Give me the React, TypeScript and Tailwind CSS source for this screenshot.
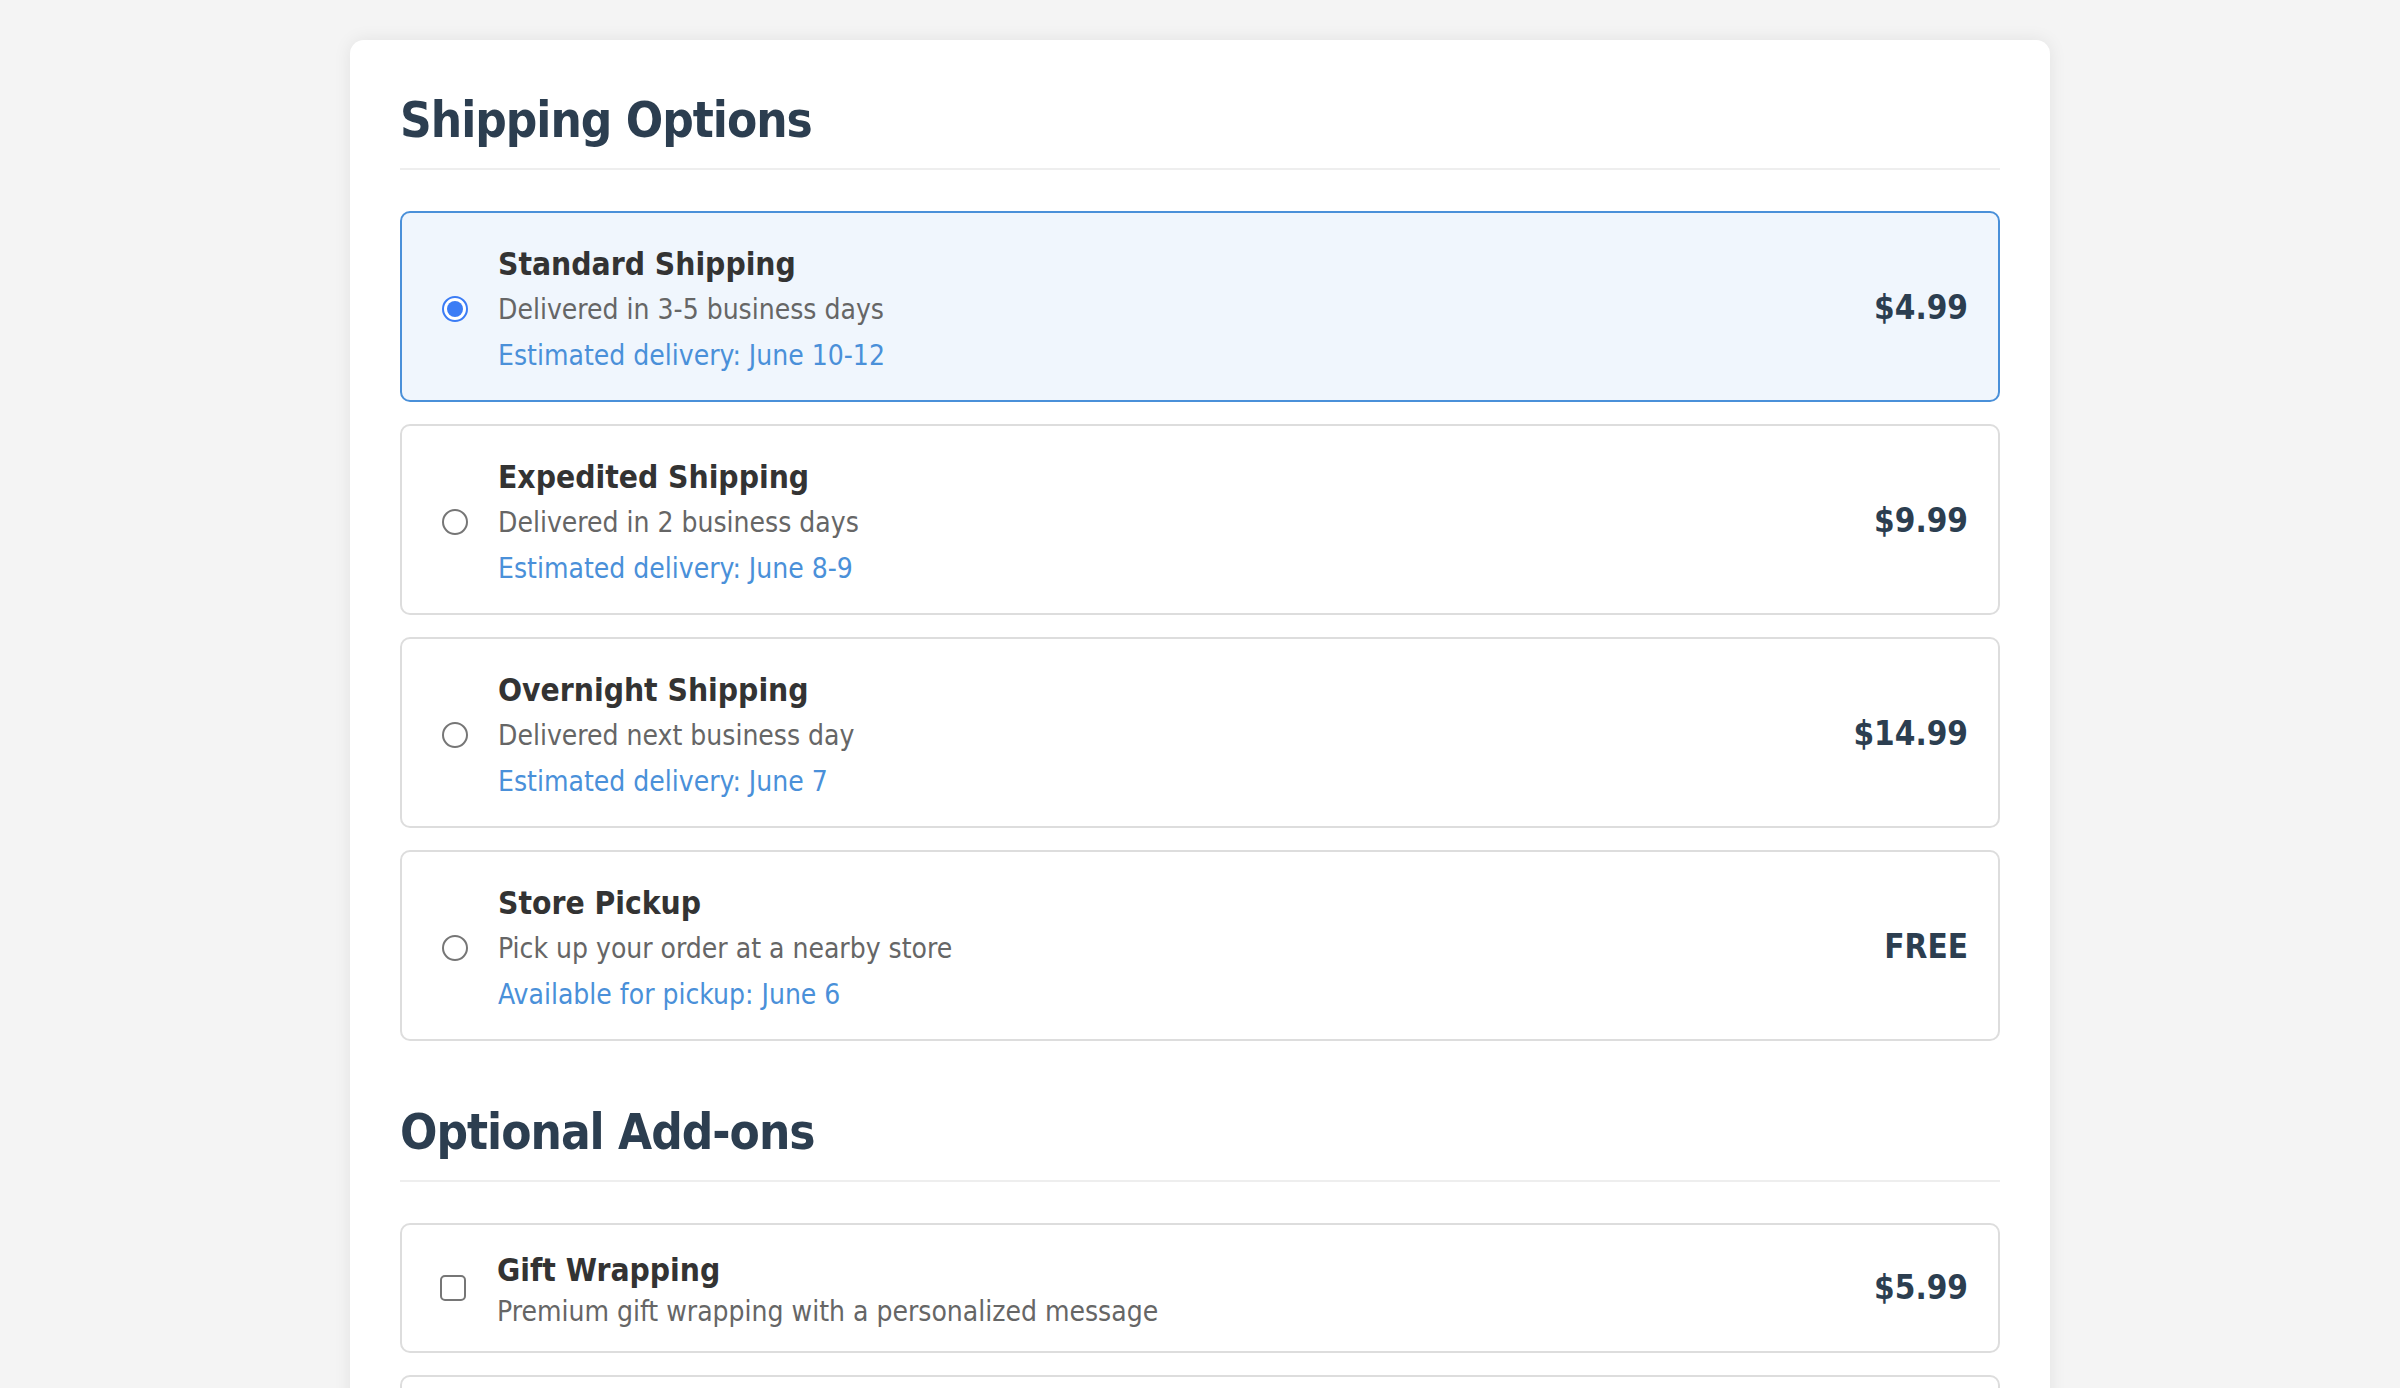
import React from "react";

type ShippingOption = {
  id: string;
  title: string;
  desc: string;
  eta: string;
  price: string;
};

type Addon = {
  id: string;
  title: string;
  desc: string;
  price: string;
};

const shippingOptions: ShippingOption[] = [
  {
    id: "standard",
    title: "Standard Shipping",
    desc: "Delivered in 3-5 business days",
    eta: "Estimated delivery: June 10-12",
    price: "$4.99",
  },
  {
    id: "expedited",
    title: "Expedited Shipping",
    desc: "Delivered in 2 business days",
    eta: "Estimated delivery: June 8-9",
    price: "$9.99",
  },
  {
    id: "overnight",
    title: "Overnight Shipping",
    desc: "Delivered next business day",
    eta: "Estimated delivery: June 7",
    price: "$14.99",
  },
  {
    id: "pickup",
    title: "Store Pickup",
    desc: "Pick up your order at a nearby store",
    eta: "Available for pickup: June 6",
    price: "FREE",
  },
];

const addons: Addon[] = [
  {
    id: "gift",
    title: "Gift Wrapping",
    desc: "Premium gift wrapping with a personalized message",
    price: "$5.99",
  },
  {
    id: "insurance",
    title: "Shipping Insurance",
    desc: "Protect your package against loss or damage",
    price: "$2.99",
  },
];

const Radio = ({ checked }: { checked: boolean }) => {
  if (checked) {
    return (
      <div className="w-[26px] h-[26px] shrink-0 rounded-full border-2 border-[#3b7cf5] bg-white flex items-center justify-center mt-[4px]">
        <div className="w-[16px] h-[16px] rounded-full bg-[#3b7cf5]" />
      </div>
    );
  }
  return (
    <div className="w-[26px] h-[26px] shrink-0 rounded-full border-2 border-[#767676] bg-white mt-[4px]" />
  );
};

const SectionTitle = ({ children }: { children: React.ReactNode }) => (
  <h2 className="text-[49px] leading-[57px] font-bold tracking-[-1px] text-[#2c3e50] pt-[2px] pb-[19px] border-b-2 border-[#eeeeee] mb-[41px]">
    {children}
  </h2>
);

const App = () => {
  const [selected, setSelected] = React.useState("standard");
  const [picked, setPicked] = React.useState<string[]>([]);

  const toggle = (id: string) =>
    setPicked((p) => (p.includes(id) ? p.filter((x) => x !== id) : [...p, id]));

  return (
    <div
      className="min-h-screen bg-[#f4f4f4] pt-[40px] pb-[40px]"
      style={{ fontFamily: '"DejaVu Sans Condensed", "DejaVu Sans", sans-serif' }}
    >
      <div className="w-[1700px] mx-auto bg-white rounded-[14px] p-[50px] shadow-[0_0_18px_rgba(0,0,0,0.08)]">
        <SectionTitle>Shipping Options</SectionTitle>
        <div className="flex flex-col gap-[22px]">
          {shippingOptions.map((opt) => {
            const isOn = selected === opt.id;
            return (
              <div
                key={opt.id}
                onClick={() => setSelected(opt.id)}
                className={
                  isOn
                    ? "flex items-center rounded-[10px] border-2 border-[#4a90d9] bg-[#f0f6fd] pl-[40px] pr-[30px] cursor-pointer"
                    : "flex items-center rounded-[10px] border-2 border-[#dddddd] bg-white pl-[40px] pr-[30px] cursor-pointer"
                }
              >
                <Radio checked={isOn} />
                <div className="flex flex-col ml-[30px] flex-1 pt-[28px] pb-[22px]">
                  <p className="text-[31.5px] leading-[46px] font-bold text-[#333333]">
                    {opt.title}
                  </p>
                  <p className="text-[28px] leading-[46px] text-[#666666]">
                    {opt.desc}
                  </p>
                  <p className="text-[28px] leading-[45px] text-[#4a90d9]">
                    {opt.eta}
                  </p>
                </div>
                <p className="text-[33px] font-bold text-[#2c3e50] mt-[3px]">{opt.price}</p>
              </div>
            );
          })}
        </div>

        <div className="mt-[61px]">
          <SectionTitle>Optional Add-ons</SectionTitle>
          <div className="flex flex-col gap-[22px]">
            {addons.map((a) => {
              const isOn = picked.includes(a.id);
              return (
                <div
                  key={a.id}
                  onClick={() => toggle(a.id)}
                  className="flex items-center rounded-[10px] border-2 border-[#dddddd] bg-white pl-[38px] pr-[30px] cursor-pointer"
                >
                  <div
                    className={
                      isOn
                        ? "w-[26px] h-[26px] shrink-0 rounded-[5px] border-2 border-[#3b7cf5] bg-[#3b7cf5]"
                        : "w-[26px] h-[26px] shrink-0 rounded-[5px] border-2 border-[#767676] bg-white"
                    }
                  />
                  <div className="flex flex-col ml-[31px] flex-1 pt-[24px] pb-[18px]">
                    <p className="text-[31.5px] leading-[42px] font-bold text-[#333333]">
                      {a.title}
                    </p>
                    <p className="text-[28px] leading-[42px] text-[#666666]">
                      {a.desc}
                    </p>
                  </div>
                  <p className="text-[33px] font-bold text-[#2c3e50]">{a.price}</p>
                </div>
              );
            })}
          </div>
        </div>
      </div>
    </div>
  );
};

export default App;
